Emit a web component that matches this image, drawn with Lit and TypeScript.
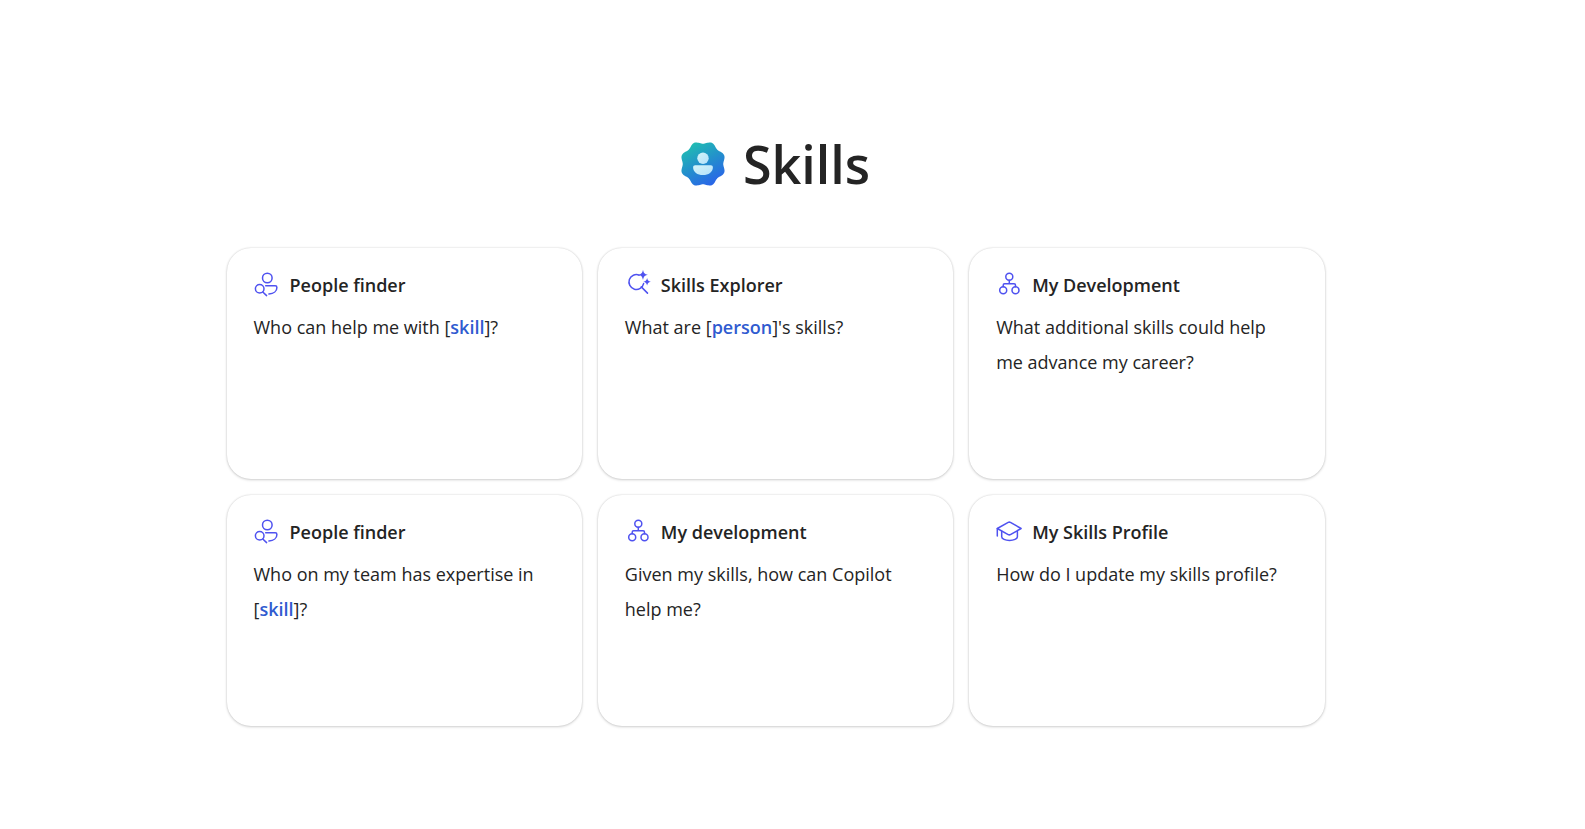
import { LitElement, html, css, svg, TemplateResult } from "lit";
import { customElement, property } from "lit/decorators.js";

type IconName = "finder" | "explorer" | "network" | "cap";

interface Prompt {
  icon: IconName;
  title: string;
  before: string;
  slot?: string;
  after?: string;
}

const prompts: Prompt[] = [
  { icon: "finder", title: "People finder", before: "Who can help me with [", slot: "skill", after: "]?" },
  { icon: "explorer", title: "Skills Explorer", before: "What are [", slot: "person", after: "]'s skills?" },
  { icon: "network", title: "My Development", before: "What additional skills could help me advance my career?" },
  { icon: "finder", title: "People finder", before: "Who on my team has expertise in [", slot: "skill", after: "]?" },
  { icon: "network", title: "My development", before: "Given my skills, how can Copilot help me?" },
  { icon: "cap", title: "My Skills Profile", before: "How do I update my skills profile?" },
];

const icons: Record<IconName, TemplateResult> = {
  finder: svg`
    <circle cx="13.300" cy="7" r="4.800"/>
    <circle cx="5.700" cy="17.800" r="4.300"/>
    <path d="M8.800 21l3.800 3.600"/>
    <path d="M11.700 14.700h9.500c1.100 0 1.700.7 1.700 1.700 0 3.800-3.200 6.300-8 6.500"/>`,
  explorer: svg`
    <path d="M14.200 4.200A7.400 7.400 0 1 0 18.600 12.600"/>
    <path d="M16.300 15.900l6.200 6.200"/>
    <path class="solid" d="M18-1.300c.8 3.500 1.500 4.300 5 5.100-3.500.8-4.200 1.600-5 5.100-.8-3.500-1.500-4.300-5-5.100 3.500-.8 4.200-1.600 5-5.100z"/>
    <path class="solid" d="M22.100 7.100c.6 2.500 1.100 3.100 3.700 3.700-2.600.6-3.100 1.200-3.700 3.700-.6-2.500-1.100-3.100-3.700-3.700 2.600-.6 3.100-1.200 3.700-3.700z"/>`,
  network: svg`
    <circle cx="13.300" cy="5.800" r="3.500"/>
    <circle cx="7.200" cy="19.300" r="3.500"/>
    <circle cx="19.500" cy="19.300" r="3.500"/>
    <path d="M13.300 9.300v3.500M7.200 15.800v-1.600c0-.9.500-1.400 1.400-1.400h9.500c.9 0 1.400.5 1.400 1.400v1.600"/>`,
  cap: svg`
    <path d="M1.300 10.500L12.200 4.400c.8-.4 1.400-.4 2.200 0l10.700 6.100-10.700 6.100c-.8.400-1.400.4-2.200 0z"/>
    <path d="M1.300 10.500v7.600"/>
    <path d="M5.700 13.200v5.500c0 2.200 3.600 3.800 7.800 3.800s7.900-1.600 7.900-3.800v-5.500"/>`,
};

/** Outline of the eight-lobed badge, traced around its centre. */
function badgeOutline(size: number, lobes: number): string {
  const c = size / 2;
  const steps = 160;
  const points: string[] = [];
  for (let i = 0; i < steps; i++) {
    const a = (i / steps) * Math.PI * 2;
    const r = c * (0.98 - 0.06 * Math.cos(lobes * a));
    points.push(`${(c + r * Math.cos(a)).toFixed(2)} ${(c + r * Math.sin(a)).toFixed(2)}`);
  }
  return `M${points.join("L")}Z`;
}

@customElement("prompt-card")
export class PromptCard extends LitElement {
  @property({ attribute: false }) prompt!: Prompt;

  static styles = css`
    :host {
      display: grid;
    }
    .card {
      display: flex;
      flex-direction: column;
      gap: 7px;
      min-height: 231px;
      padding: 20px 32px 20px 27px;
      border: 0;
      border-radius: 24px;
      background: #fff;
      box-shadow: 0 0 2px rgba(0, 0, 0, 0.16), 0 1px 3px rgba(0, 0, 0, 0.16);
      color: #242424;
      font: inherit;
      text-align: left;
      cursor: pointer;
    }
    .head {
      display: flex;
      align-items: center;
      gap: 10px;
      font-size: 18px;
      font-weight: 600;
      line-height: 35px;
    }
    .icon {
      flex: none;
      width: 26px;
      height: 26px;
      margin-bottom: 4px;
      overflow: visible;
      fill: none;
      stroke: #4f52f0;
      stroke-width: 1.5;
      stroke-linecap: round;
      stroke-linejoin: round;
    }
    .solid {
      fill: #4f52f0;
      stroke: none;
    }
    .text {
      font-size: 18px;
      line-height: 35px;
    }
    .slot {
      color: #2f5bd0;
      font-weight: 600;
    }
  `;

  render() {
    const { icon, title, before, slot, after } = this.prompt;
    return html`
      <button class="card" type="button">
        <span class="head">
          <svg class="icon" viewBox="0 0 26 26" aria-hidden="true">${icons[icon]}</svg>
          <span>${title}</span>
        </span>
        <span class="text">${before}${slot ? html`<span class="slot">${slot}</span>` : ""}${after ?? ""}</span>
      </button>
    `;
  }
}

@customElement("app-root")
export class AppRoot extends LitElement {
  static styles = css`
    :host {
      display: block;
      box-sizing: border-box;
      min-height: 100vh;
      padding: 128px 50px 48px 16px;
      background: #fff;
      color: #242424;
      font-family: "Segoe UI", "Open Sans", "Noto Sans", sans-serif;
    }
    .page {
      display: flex;
      flex-direction: column;
      gap: 48px;
      max-width: 1098px;
      margin: 0 auto;
    }
    .brand {
      display: flex;
      align-items: center;
      justify-content: center;
      gap: 18px;
    }
    .logo {
      width: 44px;
      height: 44px;
      overflow: visible;
    }
    .name {
      margin: 0;
      font-size: 52px;
      font-weight: 600;
      line-height: 72px;
    }
    .grid {
      display: grid;
      grid-template-columns: repeat(auto-fit, minmax(300px, 1fr));
      gap: 16px;
    }
  `;

  render() {
    return html`
      <main class="page">
        <header class="brand">
          <svg class="logo" viewBox="0 0 44 44" aria-hidden="true">
            <defs>
              <linearGradient id="badge" x1="0.2" y1="0" x2="0.75" y2="1">
                <stop offset="0" stop-color="#20c0b0" />
                <stop offset="0.5" stop-color="#2390cc" />
                <stop offset="1" stop-color="#2a62ea" />
              </linearGradient>
              <linearGradient id="person" x1="0" y1="0" x2="1" y2="1">
                <stop offset="0" stop-color="#d4f4f8" />
                <stop offset="1" stop-color="#b4e2fb" />
              </linearGradient>
            </defs>
            <path fill="url(#badge)" d=${badgeOutline(44, 8)} />
            <circle fill="url(#person)" cx="22" cy="16.200" r="5.700" />
            <path
              fill="url(#person)"
              d="M14.200 23.200h15.600c1.300 0 2.100.8 2.100 2 0 4.800-4.300 7.900-9.900 7.900s-9.900-3.100-9.900-7.900c0-1.200.8-2 2.100-2z"
            />
          </svg>
          <h1 class="name">Skills</h1>
        </header>
        <section class="grid" aria-label="Suggested prompts">
          ${prompts.map((p) => html`<prompt-card .prompt=${p}></prompt-card>`)}
        </section>
      </main>
    `;
  }
}
